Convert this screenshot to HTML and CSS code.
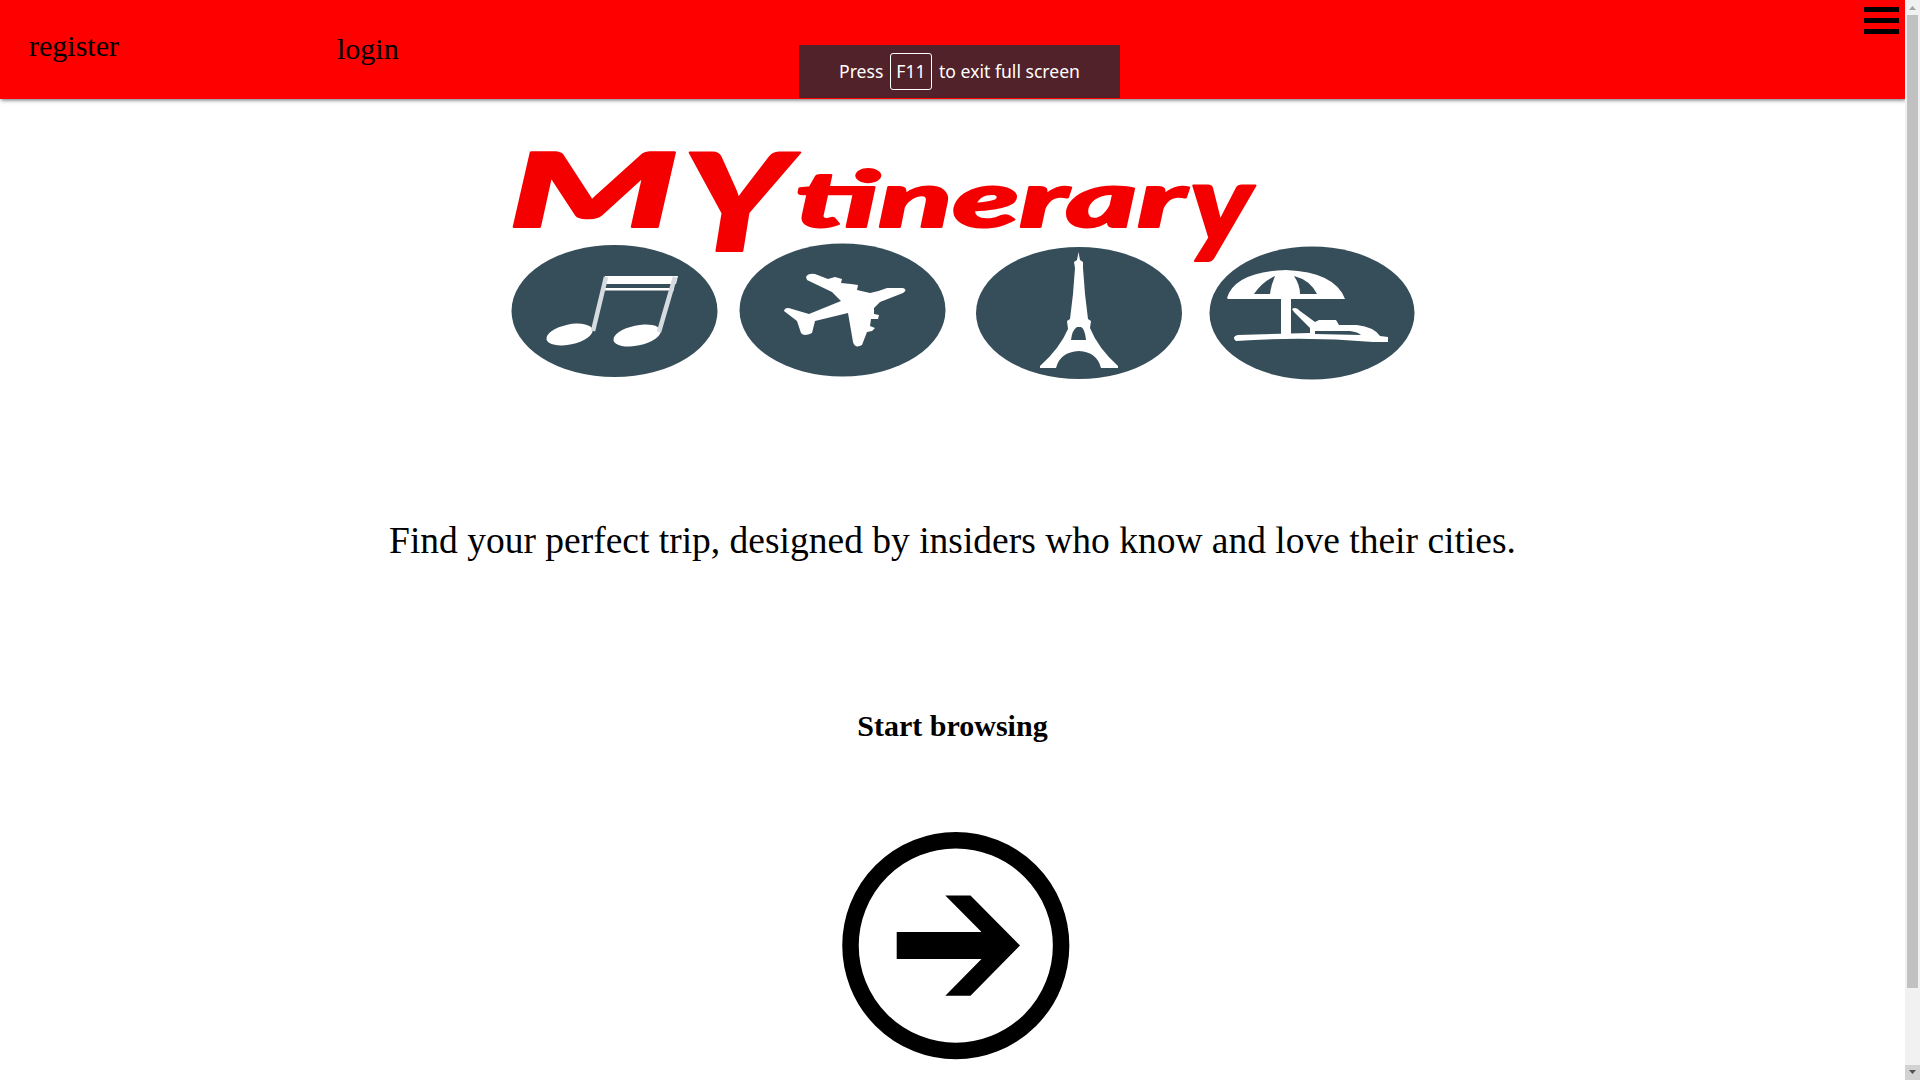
FILE: index.html
```html
<!DOCTYPE html>
<html lang="en">
<head>
<meta charset="utf-8">
<title>MYtinerary</title>
<link rel="stylesheet" href="styles.css">
</head>
<body>
<div class="page">
  <header class="navbar">
    <a class="nav-link register">register</a>
    <a class="nav-link login">login</a>
    <div class="burger"><span></span><span></span><span></span></div>
  </header>
  <main class="content">
    <svg class="logo" viewBox="500 140 930 250" role="img" aria-label="MYtinerary">
      <g fill="#364e59">
        <ellipse cx="614.5" cy="311" rx="103" ry="66"/>
        <ellipse cx="842.5" cy="310" rx="103" ry="66.5"/>
        <ellipse cx="1079" cy="313" rx="103" ry="66"/>
        <ellipse cx="1312" cy="313" rx="102.500" ry="66.500"/>
      </g>
      <!-- music notes -->
      <g fill="#fff">
        <path d="M605 276H678L676 284H604ZM604 288H674V290.500H603Z"/>
        <ellipse cx="569.5" cy="334.500" rx="23.500" ry="10" transform="rotate(-12 569.5 334.500)"/>
        <ellipse cx="637" cy="335.500" rx="24" ry="10" transform="rotate(-12 637 335.500)"/>
      </g>
      <path d="M606 277L593 331M675 277L659 332" fill="none" stroke="#d5dbde" stroke-width="4.500"/>
      <!-- plane -->
      <path fill="#fff" d="M806 277Q808 273 815 274L828 279L835 277L842 279L841 283L851 284L858 285L857 290L870 293Q880 291 887 288L903 288Q908 290 903 293L880 302L874 308L874 314L879 315L878 319L871 319L870 326L875 328L872 331L867 332L862 345Q855 349 853 342L848 313L815 321L812 333Q804 337 801 333L797 321L784 311Q785 306 792 309L809 314L841 301L832 292L807 280Z"/>
      <!-- tower -->
      <path fill="#fff" fill-rule="evenodd" d="M1078.500 252L1080 260L1083 262L1083 268L1085 294L1088 319L1091 321L1090 328Q1098 348 1118 366V368H1101Q1097 352 1079 351Q1060 352 1056 368H1040V366Q1060 348 1068 329L1067 321L1070 319L1073 294L1075 268L1074 262L1077 260ZM1077 327Q1072 330 1071 340H1086Q1085 329 1081 327Z"/>
      <!-- beach -->
      <g fill="#fff">
        <path fill-rule="evenodd" d="M1227 298Q1235 272 1286 270Q1335 272 1345 299H1228ZM1254 294H1270Q1271 285 1275 276Q1262 282 1254 294ZM1294 276Q1300 285 1300 294H1317Q1310 280 1294 276Z"/>
        <path d="M1281 298H1291V335H1281ZM1292 309Q1296 306 1300 311L1315 322L1319 320H1336L1339 325H1357Q1374 327 1380 336L1388 337V342H1373Q1305 336 1236 341Q1231 337 1238 335L1310 333V328L1294 312Z"/>
      </g>
      <path d="M1315 331H1350Q1358 332 1361 335L1315 334Z" fill="#364e59"/>
      <text class="wordmark"><tspan class="big" x="508" y="227" textLength="170" lengthAdjust="spacingAndGlyphs">M</tspan><tspan class="tall" x="682" y="251" textLength="108" lengthAdjust="spacingAndGlyphs">Y</tspan><tspan class="small" x="795" y="227" textLength="391" lengthAdjust="spacingAndGlyphs">tinerar</tspan><tspan class="tail" x="1190" y="243" textLength="62" lengthAdjust="spacingAndGlyphs">y</tspan></text>
    </svg>
    <p class="tagline">Find your perfect trip, designed by insiders who know and love their cities.</p>
    <h1 class="start">Start browsing</h1>
    <svg class="arrow" viewBox="842 832 228 228">
      <circle cx="955.800" cy="945.600" r="105.300" fill="none" stroke="#000" stroke-width="16.500"/>
      <path d="M896.700 932H981.500L945.300 895.500H970.500L1020 945.500L970.500 995.700H945.300L981.500 959H896.700Z"/>
    </svg>
  </main>
</div>
<div class="scrollbar">
  <svg class="up" viewBox="0 0 15 15"><path d="M4 10L7.500 6L11 10Z" fill="#a3a3a3"/></svg>
  <div class="thumb"></div>
  <svg class="down" viewBox="0 0 15 15"><path d="M4 5L7.500 9L11 5Z" fill="#505050"/></svg>
</div>
<div class="toast"><span class="press">Press</span><kbd>F11</kbd><span>to exit full screen</span></div>
</body>
</html>
```
FILE: styles.css
```css
* { box-sizing: border-box; }
body {
  margin: 0;
  height: 1080px;
  display: flex;
  overflow: hidden;
  background: #fff;
  color: #000;
  font-family: "Liberation Serif", serif;
}
.page { flex: 1; height: 1080px; overflow: hidden; }
.navbar {
  display: flex;
  align-items: flex-start;
  height: 99px;
  padding: 7px 6px 0 29px;
  background: #f00;
  box-shadow: 1px 1px 4px rgba(0, 0, 0, .6);
}
.nav-link { font-size: 30px; line-height: 34px; }
.register { width: 308px; padding-top: 22px; }
.login { padding-top: 25px; }
.burger { display: grid; gap: 6px; width: 35px; margin-left: auto; }
.burger span { height: 5px; background: #000; }
.content { display: flex; flex-direction: column; align-items: center; }
.logo { width: 930px; height: 250px; margin: 41px 0 0 25px; overflow: visible; }
.wordmark {
  font-family: Lato, sans-serif;
  font-style: italic;
  font-weight: 900;
  fill: #f50000;
  stroke: #f50000;
  stroke-width: 2px;
  stroke-linejoin: round;
}
.big { font-size: 102px; }
.tall { font-size: 136px; }
.small { font-size: 79px; }
.tail { font-size: 110px; }
.tagline { margin: 129px 0 0; font-size: 37.5px; line-height: 44px; white-space: nowrap; }
.start { margin: 146px 0 0; font-size: 30px; line-height: 34px; }
.arrow { width: 228px; height: 228px; margin: 89px 0 0 7px; }
.scrollbar {
  display: flex;
  flex-direction: column;
  width: 15px;
  height: 1080px;
  background: #f1f1f1;
}
.up, .down { display: block; width: 15px; height: 15px; }
.thumb { width: 11px; height: 973px; margin-left: 2px; background: #c1c1c1; }
.down { margin-top: auto; background: #d2d2d2; }
.toast {
  position: absolute;
  left: 799px;
  top: 45px;
  display: flex;
  align-items: center;
  width: 321px;
  height: 53px;
  padding-left: 40px;
  background: #512229;
  color: #fff;
  font: 17.6px "Noto Sans", sans-serif;
  white-space: nowrap;
}
.toast span { padding-bottom: 1px; }
.toast kbd {
  width: 42px;
  height: 37px;
  margin: 0 7px 0 8px;
  border: 1px solid #fff;
  border-radius: 3px;
  font: inherit;
  line-height: 35px;
  text-align: center;
}
.press { width: 43px; }
```
